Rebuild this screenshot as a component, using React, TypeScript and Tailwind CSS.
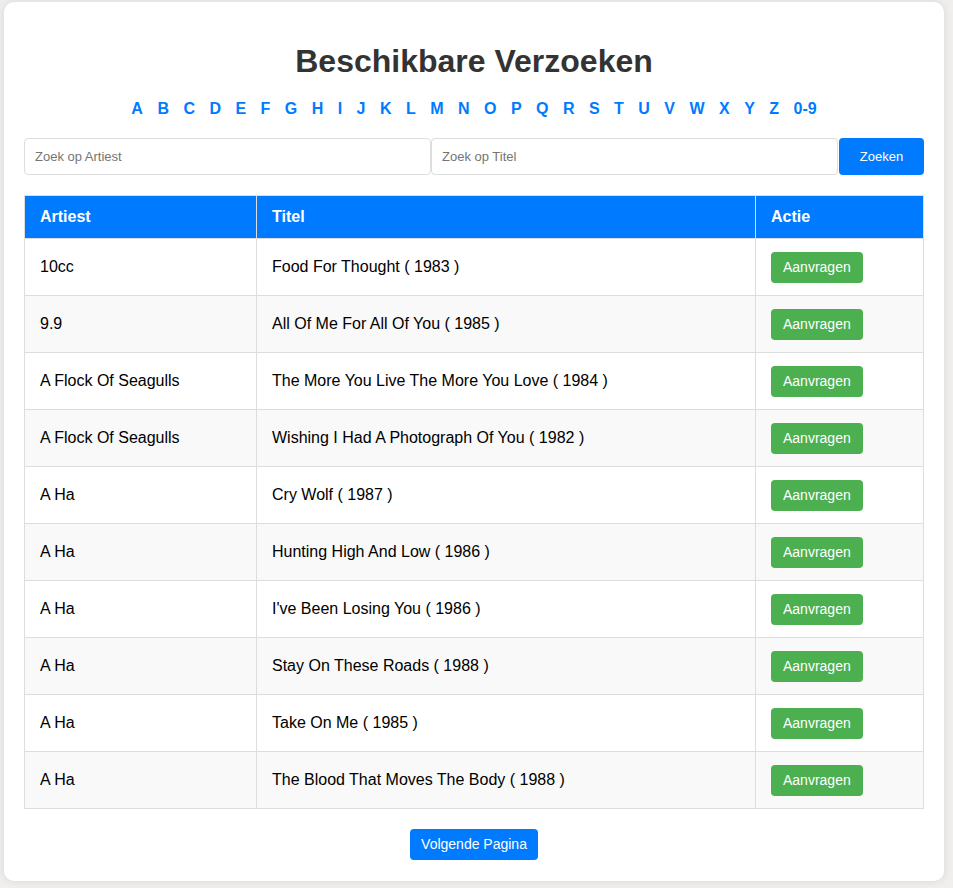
import React, { useState } from 'react'

const letters = 'ABCDEFGHIJKLMNOPQRSTUVWXYZ'.split('').concat(['0-9'])

const songs = [
  { artist: '10cc', title: 'Food For Thought ( 1983 )' },
  { artist: '9.9', title: 'All Of Me For All Of You ( 1985 )' },
  { artist: 'A Flock Of Seagulls', title: 'The More You Live The More You Love ( 1984 )' },
  { artist: 'A Flock Of Seagulls', title: 'Wishing I Had A Photograph Of You ( 1982 )' },
  { artist: 'A Ha', title: 'Cry Wolf ( 1987 )' },
  { artist: 'A Ha', title: 'Hunting High And Low ( 1986 )' },
  { artist: 'A Ha', title: "I've Been Losing You ( 1986 )" },
  { artist: 'A Ha', title: 'Stay On These Roads ( 1988 )' },
  { artist: 'A Ha', title: 'Take On Me ( 1985 )' },
  { artist: 'A Ha', title: 'The Blood That Moves The Body ( 1988 )' }
]

export default function App() {
  const [artist, setArtist] = useState('')
  const [titel, setTitel] = useState('')

  return (
    <div className="min-h-[888px] bg-[#f0efee] pt-[2px] pl-[4px] pr-[9px] pb-[7px] font-['Liberation_Sans',Arial,sans-serif]">
      <div className="w-[940px] bg-white rounded-[10px] shadow-[0_0_10px_rgba(0,0,0,0.1)] px-5 pt-5 pb-[21px]">
        <h1 className="text-[32px] leading-[37px] font-bold text-[#333] text-center my-[21px]">
          Beschikbare Verzoeken
        </h1>

        <div className="text-center text-[16px] leading-[18px] font-bold mt-[-1px] mb-[20px]">
          {letters.map(l => (
            <React.Fragment key={l}>
              <a href="#" className="text-[#007bff] mx-[5px] no-underline">{l}</a>{' '}
            </React.Fragment>
          ))}
        </div>

        <div className="flex items-stretch">
          <input
            value={artist}
            onChange={e => setArtist(e.target.value)}
            placeholder="Zoek op Artiest"
            className="flex-1 min-w-0 h-[37px] px-[10px] text-[13px] border border-[#ddd] rounded-[4px] placeholder:text-[#757575] outline-none"
          />
          <input
            value={titel}
            onChange={e => setTitel(e.target.value)}
            placeholder="Zoek op Titel"
            className="flex-1 min-w-0 h-[37px] px-[10px] text-[13px] border border-[#ddd] rounded-[4px] placeholder:text-[#757575] outline-none"
          />
          <button className="ml-px w-[85px] h-[37px] bg-[#007bff] text-white text-[13px] rounded-[4px]">
            Zoeken
          </button>
        </div>

        <table className="w-[900px] mt-5 border-collapse table-fixed text-[16px] leading-[18px]">
          <thead>
            <tr className="bg-[#007bff] text-white">
              <th className="w-[232px] border border-[#ddd] px-[15px] py-3 text-left font-bold">Artiest</th>
              <th className="w-[499px] border border-[#ddd] px-[15px] py-3 text-left font-bold">Titel</th>
              <th className="border border-[#ddd] px-[15px] py-3 text-left font-bold">Actie</th>
            </tr>
          </thead>
          <tbody>
            {songs.map((s, i) => (
              <tr key={i} className={i % 2 === 1 ? 'bg-[#f9f9f9]' : 'bg-white'}>
                <td className="h-[57px] border border-[#ddd] px-[15px] py-3 text-black">{s.artist}</td>
                <td className="border border-[#ddd] px-[15px] py-3 text-black">{s.title}</td>
                <td className="border border-[#ddd] px-[15px] py-3">
                  <button className="h-[31px] px-[12px] bg-[#4caf50] text-white text-[14px] rounded-[4px] align-middle">
                    Aanvragen
                  </button>
                </td>
              </tr>
            ))}
          </tbody>
        </table>

        <div className="flex justify-center mt-5">
          <button className="h-[31px] px-[11px] bg-[#007bff] text-white text-[14px] rounded-[4px]">
            Volgende Pagina
          </button>
        </div>
      </div>
    </div>
  )
}
